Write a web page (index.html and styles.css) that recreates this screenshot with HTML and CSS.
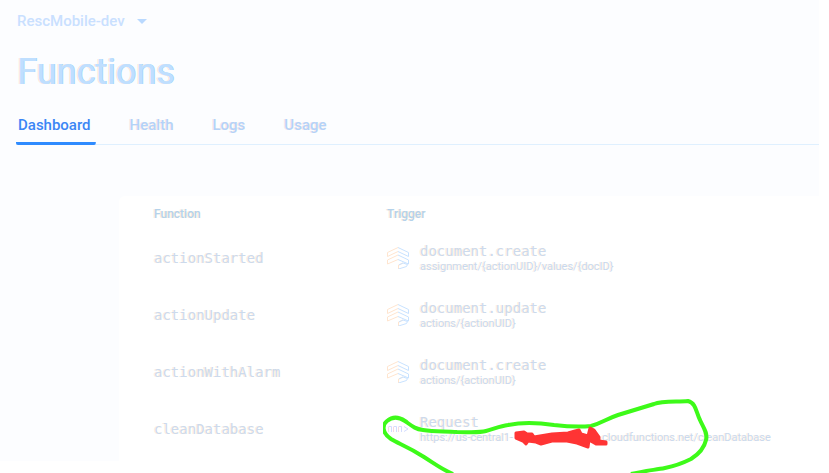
FILE: index.html
```html
<!DOCTYPE html>
<html lang="en">
<head>
<meta charset="utf-8">
<meta name="viewport" content="width=device-width, initial-scale=1">
<title>Functions</title>
<link rel="stylesheet" href="styles.css">
</head>
<body>
<svg class="defs" aria-hidden="true">
  <symbol id="firestore" viewBox="0 0 22 22">
    <g fill="none" stroke-width="1">
      <path stroke="#ffe5cf" d="M.5 9.500V5.500L11 .5M.5 9.500L11 4.500M.5 17V13L11 8M.5 17L11 12.500M11.500 22V18L16 16"/>
      <path stroke="#c8e2ff" d="M11 .5l10.500 5v4L11 4.500M11 8l10.500 5v4L11 12.500M12 18l4-2 4.500 1.500-1 2L11.500 22"/>
    </g>
  </symbol>
</svg>
<div class="page">
  <header class="header">
    <button class="project" type="button">RescMobile-dev <span class="caret"></span></button>
    <h1 class="title">Functions</h1>
    <nav class="tabs">
      <a class="tab active" href="#dashboard">Dashboard</a>
      <a class="tab" href="#health">Health</a>
      <a class="tab" href="#logs">Logs</a>
      <a class="tab" href="#usage">Usage</a>
    </nav>
  </header>
  <main class="card">
    <table class="functions">
      <thead>
        <tr><th class="name">Function</th><th>Trigger</th></tr>
      </thead>
      <tbody>
        <tr>
          <td class="mono">actionStarted</td>
          <td><div class="trigger"><svg class="icon"><use href="#firestore"/></svg><div><div class="mono event">document.create</div><div class="path">assignment/{actionUID}/values/{docID}</div></div></div></td>
        </tr>
        <tr>
          <td class="mono">actionUpdate</td>
          <td><div class="trigger"><svg class="icon"><use href="#firestore"/></svg><div><div class="mono event">document.update</div><div class="path">actions/{actionUID}</div></div></div></td>
        </tr>
        <tr>
          <td class="mono">actionWithAlarm</td>
          <td><div class="trigger"><svg class="icon"><use href="#firestore"/></svg><div><div class="mono event">document.create</div><div class="path">actions/{actionUID}</div></div></div></td>
        </tr>
        <tr>
          <td class="mono">cleanDatabase</td>
          <td><div class="trigger"><svg class="icon" viewBox="0 0 22 22"><g fill="none"><path stroke="#f6d9e5" d="M1.500 14V8.500M6.500 14V8.500M11.500 14V8.500"/><path stroke="#d3dcff" d="M2 8.500h2.500V14M7 8.500h2.500V14M12 8.500h2.500V14M17 8.500l4 2.500-4 2.500"/></g></svg><div><div class="mono event">Request</div><div class="path request"><span>https://us-central1-</span><span>.cloudfunctions.net/cleanDatabase</span></div></div></div></td>
        </tr>
      </tbody>
    </table>
    <svg class="markup" viewBox="383 399 328 74" aria-hidden="true">
      <path class="circle" d="M453 474C441 469 435 464 424 457C407 446 399 444 391 439C382 433 382 425 387 421C393 416 399 417 405 421C412 426 415 429 423 430C435 432 444 431 457 432C468 432 479 433 486 431C494 429 500 426 508 425C522 422 541 423 554 425C571 427 582 427 591 426C602 423 606 419 618 415L654 404C662 401 677 402 688 401C696 403 696 412 700 420C703 427 708 433 706 440C704 449 699 454 691 459C681 464 675 466 665 468C654 470 643 471 631 474"/>
      <path class="scribble" d="M516 433L524 432 527 434 532 434 534 437 552 434 568 433 575 431 579 430 581 434 588 436 590 428 594 430 599 437 599 441 606 442 606 444 596 444 589 440 588 447 577 443 567 441 552 441 541 444 536 442 528 441 526 444 523 441 516 438Z"/>
    </svg>
  </main>
</div>
</body>
</html>
```
FILE: styles.css
```css
* { box-sizing: border-box; }
html { background: #fff; }
body { display: flow-root; margin: 0; font-family: Roboto, "Liberation Sans", sans-serif; }
.defs { position: absolute; width: 0; height: 0; }
.page { margin: 0 10px 12px 0; background: #fcfdff; }
.header { padding: 12px 0 0 17px; margin-bottom: 51px; }
.project {
  display: flex; align-items: center; gap: 12px;
  padding: 0; border: 0; background: none;
  color: #c9e0ff; font: 500 15px/18px Roboto, sans-serif;
}
.caret { border: 5px solid transparent; border-top-color: #b9d9ff; border-bottom: 0; }
.title {
  margin: 20px 0 0; font-size: 36px; line-height: 44px; font-weight: 400;
  color: #bfdfff; text-shadow: -1px 0 #ffe9d6, 1px 0 #a5d6ff;
}
.tabs { display: flex; gap: 32px; margin: 16px 0 0 -1px; border-bottom: 1px solid #dff0ff; }
.tab {
  height: 35px; padding: 6px 5px 0 2px; margin-bottom: -1px;
  font-size: 15px; line-height: 18px; font-weight: 500; text-decoration: none;
  color: #b4d3f8; text-shadow: -1px 0 #fae6e4;
}
.tab.active {
  color: #3b86f5; text-shadow: none;
  background: linear-gradient(#2f8bff, #2f8bff) bottom / 100% 3px no-repeat;
  border-radius: 0 0 2px 2px;
}
.card {
  position: relative; margin-left: 119px; margin-right: -10px; padding: 0 0 4px 35px;
  background: #fff; border-radius: 6px 0 0 0;
}
.functions { width: 100%; border-collapse: collapse; table-layout: fixed; }
th, td { padding: 0; text-align: left; vertical-align: middle; }
th {
  height: 33px; padding-top: 3px; font-size: 12px; font-weight: 500;
  color: #b4d2ea; text-shadow: -1px 0 #fdebd5;
}
.name { width: 233px; }
td { height: 57px; }
.mono {
  font-family: "DejaVu Sans Mono", monospace; font-size: 14px;
  color: #ccdaec; text-shadow: -1px 0 #ffeedb;
}
.trigger { display: flex; align-items: center; gap: 11px; }
.icon { flex: none; width: 22px; height: 22px; }
.event { line-height: 18px; }
.path {
  font-size: 11px; line-height: 14px; white-space: nowrap;
  color: #c8d9ee; text-shadow: -1px 0 #ffefdf;
}
.request { display: flex; gap: 86px; }
.markup { position: absolute; left: 264px; top: 203px; width: 328px; height: 74px; }
.circle { fill: none; stroke: #3dfa19; stroke-width: 4; }
.scribble { fill: #ff3434; stroke: #ff3434; stroke-width: 3; stroke-linejoin: round; }
```
